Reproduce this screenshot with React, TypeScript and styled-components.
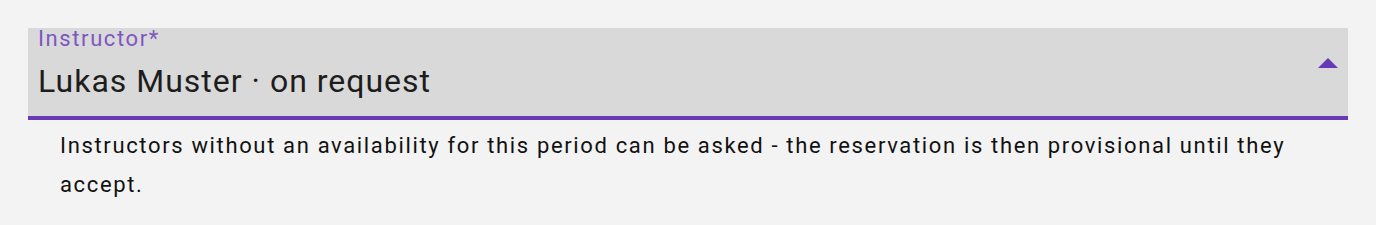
import styled, { createGlobalStyle } from 'styled-components';

const COLORS = {
  page: '#f3f3f3',
  field: '#d9d9d9',
  accent: '#673ab7',
  label: '#7e57c2',
  text: '#1d1d1d',
  helper: '#111111',
};

const GlobalStyle = createGlobalStyle`
  html, body {
    margin: 0;
    padding: 0;
    background-color: ${COLORS.page};
    font-family: Roboto, "Noto Sans", sans-serif;
  }
`;

const Root = styled.div`
  min-height: 225px;
  padding: 28px 28px 0px 28px;
  box-sizing: border-box;
  background-color: ${COLORS.page};
`;

const Field = styled.div`
  height: 92px;
  padding: 0px 10px 0px 10px;
  box-sizing: border-box;
  background-color: ${COLORS.field};
  border-bottom: 4px solid ${COLORS.accent};

  display: flex;
  align-items: flex-start;
`;

const FieldBody = styled.div`
  flex: 1;
  display: flex;
  flex-direction: column;
  gap: 11px;
`;

const Label = styled.div`
  font-size: 22px;
  line-height: 22px;
  letter-spacing: 1.6px;
  color: ${COLORS.label};
`;

const Value = styled.div`
  font-size: 32px;
  line-height: 40px;
  letter-spacing: 1px;
  color: ${COLORS.text};
`;

const ArrowWrapper = styled.div`
  margin-top: 30px;
  width: 20px;
  height: 10px;
  display: flex;

  svg {
    fill: ${COLORS.accent};
  }
`;

const HelperText = styled.p`
  margin: 6px 0px 0px 0px;
  padding: 0px 32px;
  font-size: 22px;
  line-height: 39px;
  letter-spacing: 1.65px;
  color: ${COLORS.helper};
`;

const ArrowUp = () => (
  <svg width="20" height="10" viewBox="0 0 20 10">
    <path d="M0 10 L10 0 L20 10 Z" />
  </svg>
);

const App = () => {
  return (
    <Root>
      <GlobalStyle />
      <Field>
        <FieldBody>
          <Label>Instructor*</Label>
          <Value>Lukas Muster · on request</Value>
        </FieldBody>
        <ArrowWrapper>
          <ArrowUp />
        </ArrowWrapper>
      </Field>
      <HelperText>
        Instructors without an availability for this period can be asked - the reservation is then provisional until they accept.
      </HelperText>
    </Root>
  );
};

export default App;
